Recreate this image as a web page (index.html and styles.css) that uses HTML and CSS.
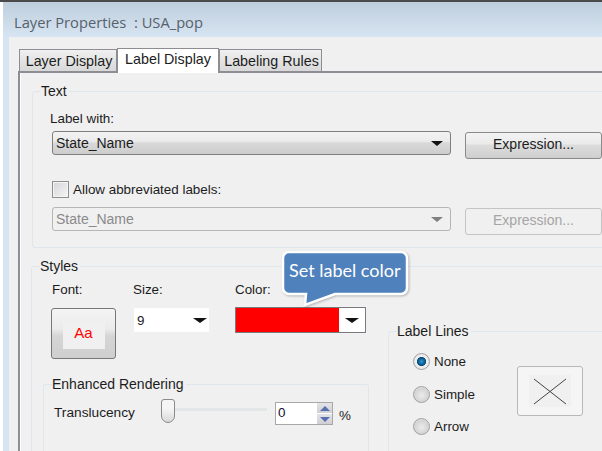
FILE: index.html
```html
<!DOCTYPE html>
<html lang="en">
<head>
<meta charset="utf-8">
<title>Layer Properties</title>
<link rel="stylesheet" href="styles.css">
</head>
<body>
<div class="app">
  <header class="title">Layer Properties&nbsp; : USA_pop</header>
  <div class="client">
    <nav class="tabs">
      <div class="tab">Layer Display</div>
      <div class="tab active">Label Display</div>
      <div class="tab">Labeling Rules</div>
    </nav>
    <main class="panel">
      <fieldset class="group text-group">
        <legend>Text</legend>
        <div class="field-label">Label with:</div>
        <div class="combo-row">
          <div class="combo"><span>State_Name</span><i class="arrow"></i></div>
          <div class="btn">Expression...</div>
        </div>
        <label class="check-row"><span class="checkbox"></span>Allow abbreviated labels:</label>
        <div class="combo-row disabled-row">
          <div class="combo disabled"><span>State_Name</span><i class="arrow"></i></div>
          <div class="btn disabled">Expression...</div>
        </div>
      </fieldset>
      <fieldset class="group styles-group">
        <legend>Styles</legend>
        <div class="styles-body">
          <div class="styles-left">
            <div class="props">
              <div class="prop font-prop">
                <div class="prop-label">Font:</div>
                <div class="font-btn"><span class="font-face">Aa</span></div>
              </div>
              <div class="prop size-prop">
                <div class="prop-label">Size:</div>
                <div class="size-select"><span>9</span><i class="arrow"></i></div>
              </div>
              <div class="prop color-prop">
                <div class="prop-label">Color:</div>
                <div class="color-select"><span class="swatch"></span><span class="color-drop"><i class="arrow"></i></span></div>
              </div>
            </div>
            <fieldset class="group enhanced">
              <legend>Enhanced Rendering</legend>
              <div class="trans-row">
                <span class="trans-label">Translucency</span>
                <div class="slider"><span class="thumb"></span><span class="track"></span></div>
                <div class="spin">
                  <span class="spin-val">0</span>
                  <span class="spin-btns">
                    <span class="spin-btn"><svg width="10" height="5" viewBox="0 0 10 5"><path d="M5 0L10 5H0Z" fill="#5a6fb0"/></svg></span>
                    <span class="spin-btn"><svg width="10" height="5" viewBox="0 0 10 5"><path d="M0 0H10L5 5Z" fill="#5a6fb0"/></svg></span>
                  </span>
                </div>
                <span class="pct">%</span>
              </div>
            </fieldset>
          </div>
          <fieldset class="group lines">
            <legend>Label Lines</legend>
            <div class="lines-body">
              <div class="radios">
                <label class="radio-row"><span class="radio on"></span>None</label>
                <label class="radio-row"><span class="radio"></span>Simple</label>
                <label class="radio-row"><span class="radio"></span>Arrow</label>
              </div>
              <div class="preview">
                <svg width="42" height="32" viewBox="0 0 42 32"><rect width="42" height="32" fill="#f0f0f0"/><path d="M5 4L37 29M37 4L5 29" stroke="#444" stroke-width="1" fill="none"/></svg>
              </div>
            </div>
          </fieldset>
        </div>
      </fieldset>
    </main>
  </div>
  <aside class="callout">
    <svg class="callout-shape" width="134" height="60" viewBox="0 0 134 60"><path d="M9 3H121a6 6 0 0 1 6 6V39a6 6 0 0 1-6 6H55L25 56L26 45H9a6 6 0 0 1-6-6V9a6 6 0 0 1 6-6Z" fill="#4f81bd" stroke="#fff" stroke-width="2.5"/></svg>
    <span class="callout-text">Set label color</span>
  </aside>
</div>
</body>
</html>
```
FILE: styles.css
```css
* { box-sizing: border-box; }
html, body { margin: 0; padding: 0; background: #fff; }
.app {
  position: relative;
  width: 602px;
  height: 451px;
  overflow: hidden;
  padding-left: 3px;
  display: flex;
  flex-direction: column;
  font-family: "Liberation Sans", Arial, sans-serif;
  font-size: 13.4px;
  color: #1c1c1c;
  border-top: 2px solid #4a4a4a;
}
.title {
  height: 35px;
  flex: none;
  padding: 9px 0 0 11px;
  background: linear-gradient(#bfcedc, #d7e5f3);
  font-family: "Open Sans", sans-serif;
  font-size: 14.7px;
  line-height: 22px;
  color: #56616b;
}
.client {
  flex: 1;
  background: #f0f0f0;
  border-left: 6px solid #d7e5f3;
  min-height: 0;
}
.tabs {
  display: flex;
  align-items: flex-end;
  height: 34px;
  padding-left: 10px;
  font-size: 14.3px;
}
.tab {
  width: 98px;
  height: 22px;
  margin-right: 4px;
  padding-left: 2px;
  border-style: solid;
  border-color: #8d8d93;
  border-width: 1.5px 1.5px 0;
  background: linear-gradient(#f0f0f0, #d8d8d8);
  text-align: center;
  line-height: 22px;
  white-space: nowrap;
}
.tab + .tab { margin-left: -4px; }
.tab.active {
  width: 102px;
  height: 25px;
  margin-bottom: -2px;
  padding-left: 0;
  background: #fff;
  position: relative;
  z-index: 1;
  line-height: 21px;
}
.tab.active + .tab { margin-left: -4px; width: 103px; }
.panel {
  margin-left: 9px;
  border-top: 2px solid #8d8d93;
  border-left: 2px solid #8d8d93;
  padding: 0 0 0 12px;
  box-shadow: inset 1px 0 #fff;
  height: 400px;
}
.group {
  margin: 0;
  padding: 0;
  border: 1px solid #dfe6ec;
  border-radius: 3px;
  min-width: 0;
}
.group legend {
  padding: 0 2px 0 0;
  line-height: 16px;
  font-size: 14px;
}
.text-group {
  height: 165px;
  margin-top: 10px;
  margin-right: -10px;
  padding: 12px 0 0 19px;
}
.text-group > legend { margin-left: -11px; }
.field-label { line-height: 16px; margin-left: -2px; }
.combo-row {
  display: flex;
  align-items: flex-start;
  margin-top: 4px;
  font-size: 14px;
}
.combo {
  width: 399px;
  height: 24px;
  display: flex;
  align-items: center;
  justify-content: space-between;
  padding: 0 7px 0 3px;
  border: 1px solid #7f7f7f;
  border-radius: 3px;
  background: linear-gradient(#f3f3f3, #ebebeb 42%, #d9d9d9 50%, #cdcdcd);
}
.arrow {
  width: 0;
  height: 0;
  border-style: solid;
  border-width: 5px 6px 0;
  border-color: #111 transparent transparent;
}
.btn {
  width: 137px;
  height: 27px;
  margin-left: 14px;
  margin-top: 1px;
  border: 1px solid #8a8a8a;
  border-radius: 3px;
  background: linear-gradient(#f3f3f3, #ebebeb 42%, #dcdcdc 50%, #cfcfcf);
  text-align: center;
  line-height: 23px;
}
.check-row {
  display: flex;
  align-items: center;
  gap: 4px;
  margin-top: 22px;
  height: 17px;
}
.checkbox {
  width: 17px;
  height: 17px;
  border: 1px solid #8f8f8f;
  background: linear-gradient(135deg, #d5d5d8, #f5f5f8);
  box-shadow: inset 0 0 0 1px #f4f4f4;
}
.disabled-row { margin-top: 9px; }
.combo.disabled {
  background: #f0f0f0;
  border-color: #b5b5b5;
  color: #8a8a8a;
}
.combo.disabled .arrow { border-top-color: #808080; }
.btn.disabled {
  background: #f0f0f0;
  border-color: #c4c4c4;
  color: #a5a5a5;
}
.styles-group {
  margin-top: 10px;
  margin-left: -1px;
  margin-right: -10px;
  height: 220px;
  border-bottom: 0;
  padding: 8px 0 0 20px;
}
.styles-group > legend { margin-left: -12px; }
.styles-body { display: flex; align-items: flex-start; }
.styles-left { width: 336px; flex: none; }
.props { display: flex; height: 92px; }
.prop-label { line-height: 16px; height: 26px; padding-left: 1px; }
.font-prop { width: 81px; margin-left: -1px; }
.font-btn {
  width: 65px;
  height: 51px;
  border: 1px solid #777;
  border-radius: 3px;
  background: linear-gradient(#f4f4f4, #ebebeb 40%, #d5d5d5 55%, #cfcfcf);
  display: flex;
  align-items: flex-start;
  justify-content: center;
  padding-top: 12px;
}
.font-face {
  width: 42px;
  height: 28px;
  background: #f0f0f0;
  color: #f00;
  font-size: 15px;
  line-height: 24px;
  text-align: center;
}
.size-prop { width: 102px; }
.size-select {
  width: 75px;
  height: 24px;
  margin-left: 2px;
  background: #fff;
  display: flex;
  align-items: center;
  justify-content: space-between;
  padding: 0 2px 0 3px;
}
.size-select .arrow { border-width: 5px 7px 0; }
.color-select {
  width: 131px;
  height: 26px;
  margin-top: -1px;
  margin-left: 1px;
  border: 1px solid #7a7a80;
  background: #fff;
  display: flex;
}
.swatch { width: 103px; background: #f00; }
.color-drop { flex: 1; display: flex; align-items: center; justify-content: center; }
.color-drop .arrow { border-width: 5px 7px 0; }
.enhanced {
  margin: 2px 0 0 -9px;
  width: 326px;
  height: 80px;
  border-bottom: 0;
  padding: 0 0 0 10px;
}
.enhanced > legend { margin-left: -2px; }
.trans-row {
  display: flex;
  align-items: flex-start;
  height: 40px;
  margin-top: 7px;
}
.trans-label { width: 107px; padding-top: 6px; white-space: nowrap; font-size: 13.7px; }
.slider { display: flex; align-items: flex-start; width: 114px; flex: none; }
.thumb {
  width: 14px;
  height: 24px;
  border: 1px solid #8a8a8a;
  border-radius: 3px 3px 7px 7px;
  background: linear-gradient(#f5f5f5 40%, #d8d8d8);
  flex: none;
}
.track {
  flex: 1;
  height: 3px;
  margin: 9px 8px 0 0;
  background: #e2e6e6;
}
.spin {
  width: 58px;
  height: 23px;
  margin-top: 3px;
  border: 1px solid #a8a8a8;
  background: #fff;
  display: flex;
  justify-content: space-between;
}
.spin-val { padding-left: 2px; line-height: 20px; color: #113; }
.spin-btns { width: 15px; display: flex; flex-direction: column; gap: 1px; }
.spin-btn {
  flex: 1;
  background: linear-gradient(#e4e4e8, #d0d0d4);
  display: flex;
  align-items: center;
  justify-content: center;
}
.pct { margin-left: 6px; padding-top: 9px; }
.lines {
  margin-top: 41px;
  width: 240px;
  height: 140px;
  border-bottom: 0;
  border-right: 0;
  padding: 0 0 0 24px;
}
.lines > legend { margin-left: -16px; }
.lines-body { display: flex; align-items: flex-start; }
.radios { width: 104px; padding-top: 14px; display: flex; flex-direction: column; gap: 15.5px; }
.radio-row { display: flex; align-items: center; gap: 4px; height: 17px; }
.radio {
  width: 17px;
  height: 17px;
  border-radius: 50%;
  border: 1px solid #a0a0a0;
  background: radial-gradient(circle at 50% 55%, #ececec, #d4d4d4 60%, #f0f0f0);
}
.radio.on {
  background: radial-gradient(circle, #2a9ad0 0, #0c5a8e 32%, #0a4a78 40%, #f0f0f0 46%, #dcdcdc 100%);
}
.preview {
  width: 66px;
  height: 50px;
  margin-top: 27px;
  border: 1px solid #b8b8b8;
  border-radius: 3px;
  background: #f5f5f5;
  display: flex;
  align-items: center;
  justify-content: center;
}
.callout {
  position: absolute;
  left: 280px;
  top: 247px;
  width: 134px;
  height: 60px;
}
.callout-shape { display: block; filter: drop-shadow(1px 1px 1px rgba(0,0,0,.25)); }
.callout-text {
  position: absolute;
  left: 9px;
  top: 10px;
  font-family: "Lato", sans-serif;
  font-size: 18px;
  line-height: 22px;
  color: #fff;
  white-space: nowrap;
}
```
